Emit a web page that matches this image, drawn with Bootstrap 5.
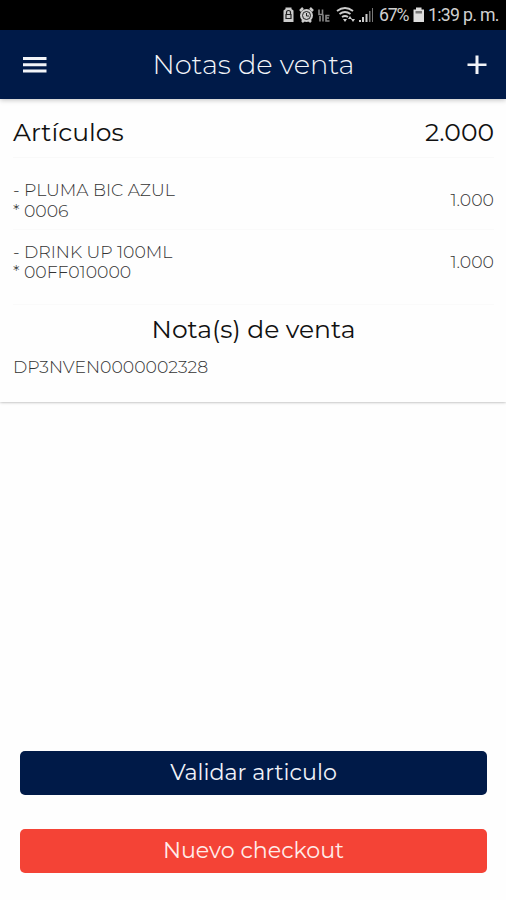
<!DOCTYPE html>
<html lang="es">
<head>
<meta charset="utf-8">
<meta name="viewport" content="width=device-width, initial-scale=1">
<title>Notas de venta</title>
<link href="https://cdn.jsdelivr.net/npm/bootstrap@5.3.0/dist/css/bootstrap.min.css" rel="stylesheet">
<style>
body{font-family:Montserrat,Inter,sans-serif;height:900px;overflow:hidden;background:#fefefe;color:#111}
.status-strip{height:30px;background:#000;color:#d0d0d0;font-family:Roboto,sans-serif;font-size:17.7px;padding-left:282px}
.status-strip svg{display:block;flex:none}
.status-text{line-height:32px;white-space:nowrap;letter-spacing:-.7px}
.charge{width:31px;margin-left:3px;letter-spacing:-1.2px}
.app-header{height:69px;background:#001a48;color:#f2f4f8;padding:0 19px 0 23px;box-shadow:0 1px 5px rgba(0,0,0,.25);z-index:1}
.app-title{font-size:27.3px;font-weight:300;line-height:34px;padding-right:7px}
.sheet{height:303px;background:#fefefe;padding:0 12px 0 13px;box-shadow:0 0 3px rgba(0,0,0,.4)}
.sheet-head{height:59px;padding-top:7px;border-bottom:1px solid #f9f9f9}
.heading{font-size:25px;font-weight:400;line-height:32px}
.entry{border-bottom:1px solid #fafafa;color:#333;font-size:17.3px;font-weight:300;line-height:20.5px}
.entry-a{height:72px;padding-top:14px}
.entry-b{height:75px;padding-bottom:10px}
.note-title{padding-top:8px}
.note-code{color:#333;font-size:17.3px;font-weight:300;line-height:24px;padding-top:10px}
.actions{padding:0 19px 27px 20px;gap:34px}
.action{height:44px;font-size:22.2px;line-height:42px;padding:0 0 1px;border:0;border-radius:5px}
.action-navy,.action-navy:hover{background:#001a48;color:#f0f2f8}
.action-red,.action-red:hover{background:#f44336;color:#ffecea}
</style>
</head>
<body class="d-flex flex-column">
<div class="status-strip d-flex align-items-center flex-shrink-0">
<svg width="94" height="30" viewBox="282 0 94 30" fill="#ccc">
<path d="M283.500 10.500l2-1.500V7.500h6V9l2 1.500V22h-10z"/>
<path d="M286.500 14v-1.500a2 2 0 0 1 4 0V14M286 14.500h5v4h-5z" fill="none" stroke="#222" stroke-width="1.200"/>
<circle cx="306.500" cy="15.500" r="6.500"/><path d="M300 11l3-3M313 11l-3-3M302 22l2-2M311 22l-2-2" stroke="#ccc" stroke-width="2.500"/>
<circle cx="306.500" cy="15.500" r="4" fill="none" stroke="#222"/><path d="M306.500 13v3h2.500" fill="none" stroke="#222"/>
<path d="M319 9.500v5h3.500v-5M320 16v5.500M323 14.500v7M329.500 15.500h-3.500v5.500h3.500M326 18h3" fill="none" stroke="#888" stroke-width="1.600"/>
<path d="M337 11q8-6 16 0M339.500 14q5.500-4 11 0M342 17q3-2 6 0" fill="none" stroke="#ccc" stroke-width="1.900"/>
<path d="M343 19h4l-2 3zM350 16l2 3h-4zM351 19h4l-2 3z"/>
<path d="M359 20h2v2h-2zM362 17h2v5h-2zM365.500 14h2v8h-2z"/><path d="M369 11h1.500v11H369zM372 8h1v14h-1z" fill="#777"/>
</svg>
<span class="status-text charge">67%</span>
<svg width="18" height="30" viewBox="0 0 18 30" fill="#ddd"><path d="M3.500 9.500h2.500V7.500h5.500v2H14V22H3.500z"/><path d="M5.500 11h6.500v2.500h-6.500z" fill="#777"/></svg>
<span class="status-text">1:39 p. m.</span>
</div>
<header class="app-header d-flex align-items-center justify-content-between position-relative flex-shrink-0">
<svg width="24" height="20" viewBox="0 0 24 20" fill="#f2f4f8"><path d="M0 2h23.500v3H0zM0 8.300h23.500v3H0zM0 14.600h23.500v3H0z"/></svg>
<h1 class="app-title m-0">Notas de venta</h1>
<svg width="20" height="20" viewBox="0 0 20 20" fill="#f2f4f8"><path d="M8.500 .5h3V8.500h8v2.500h-8v8h-3v-8h-8V8.500h8z"/></svg>
</header>
<main class="sheet flex-shrink-0">
<div class="sheet-head d-flex align-items-center justify-content-between"><h2 class="heading m-0">Artículos</h2><span class="heading">2.000</span></div>
<div class="entry entry-a d-flex align-items-center justify-content-between"><div>- PLUMA BIC AZUL<br>* 0006</div><span>1.000</span></div>
<div class="entry entry-b d-flex align-items-center justify-content-between"><div>- DRINK UP 100ML<br>* 00FF010000</div><span>1.000</span></div>
<h2 class="heading note-title text-center m-0">Nota(s) de venta</h2>
<div class="note-code">DP3NVEN0000002328</div>
</main>
<div class="actions d-flex flex-column mt-auto">
<button type="button" class="btn action action-navy">Validar articulo</button>
<button type="button" class="btn action action-red">Nuevo checkout</button>
</div>
<script src="https://cdn.jsdelivr.net/npm/bootstrap@5.3.0/dist/js/bootstrap.bundle.min.js"></script>
</body>
</html>
